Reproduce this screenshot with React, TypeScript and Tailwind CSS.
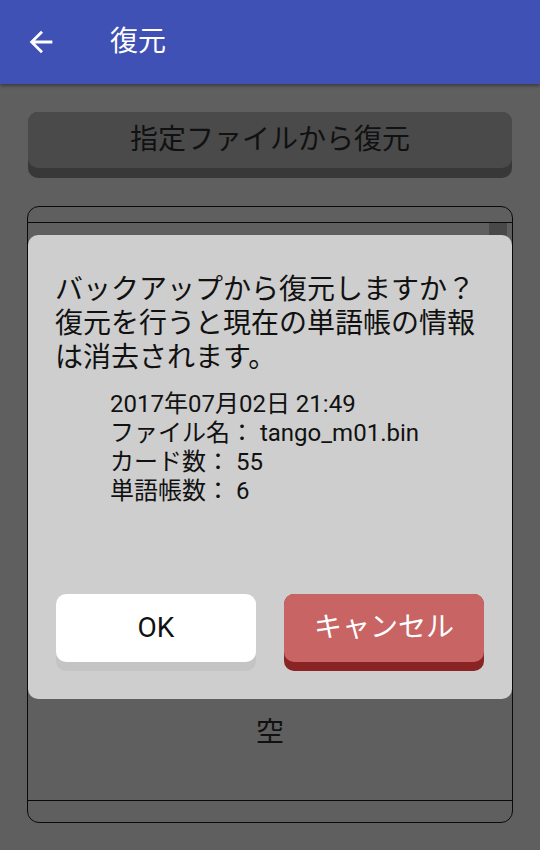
import React from 'react';

const FONT = 'font-["Roboto","Noto_Sans_CJK_JP",sans-serif]';

const BackArrow = () => (
  <svg viewBox="0 0 24 24" className="w-[34px] h-[34px] fill-white">
    <path d="M20 11H7.83l5.59-5.59L12 4l-8 8 8 8 1.41-1.41L7.83 13H20v-2z" />
  </svg>
);

const details = [
  '2017年07月02日 21:49',
  'ファイル名： tango_m01.bin',
  'カード数： 55',
  '単語帳数： 6',
];

// raised button: a face sitting on a darker base
const RaisedButton = ({
  label,
  face,
  base,
  text,
  faceH,
  baseH,
  className = '',
}: {
  label: string;
  face: string;
  base: string;
  text: string;
  faceH: string;
  baseH: string;
  className?: string;
}) => (
  <button className={`flex flex-col justify-start items-stretch rounded-[10px] ${base} ${baseH} ${className}`}>
    <div className={`w-full ${faceH} rounded-[10px] ${face} flex items-center justify-center text-[28px] leading-none ${text}`}>
      {label}
    </div>
  </button>
);

export default function App() {
  return (
    <div className={`relative w-[540px] h-[850px] overflow-hidden bg-[#5f5f5f] ${FONT}`}>
      {/* app bar */}
      <header className="relative z-10 h-[84px] bg-[#3f51b5] flex items-center shadow-[0_2px_3px_rgba(0,0,0,0.35)]">
        <div className="ml-[24px]">
          <BackArrow />
        </div>
        <h1 className="ml-[52px] text-[28px] leading-none text-white">復元</h1>
      </header>

      <main className="px-[28px] pt-[28px]">
        <RaisedButton
          label="指定ファイルから復元"
          face="bg-[#4a4a4a]"
          base="bg-[#383838]"
          text="text-[#111]"
          faceH="h-[56px]"
          baseH="h-[66px]"
          className="w-full"
        />

        {/* backup list */}
        <div className="relative mt-[28px] -mx-px h-[617px] border-[1.5px] border-[#0a0a0a] rounded-[12px] flex flex-col overflow-hidden">
          <div className="h-[16px] border-b-[1.5px] border-[#0a0a0a]" />
          <div className="flex-1 relative flex flex-col items-center justify-end pb-[53px]">
            <div className="absolute right-[5px] top-0 w-[18px] h-[80px] bg-[#484848]" />
            <span className="text-[28px] leading-none text-[#111]">空</span>
          </div>
          <div className="h-[22px] border-t-[1.5px] border-[#0a0a0a]" />
        </div>
      </main>

      {/* dialog */}
      <div className="absolute left-[28px] top-[235px] w-[484px] rounded-[10px] bg-[#cecece] px-[27px] pt-[38px] pb-[28px]">
        <p className="text-[28px] leading-[34px] text-[#111]">
          バックアップから復元しますか？<br />
          復元を行うと現在の単語帳の情報<br />
          は消去されます。
        </p>
        <div className="mt-[15px] pl-[55px] text-[24px] leading-[29px] text-[#111]">
          {details.map((d) => (
            <div key={d}>{d}</div>
          ))}
        </div>
        <div className="mt-[88px] flex gap-[28px] pl-px">
          <RaisedButton
            label="OK"
            face="bg-white"
            base="bg-[#c4c4c4]"
            text="text-[#111]"
            faceH="h-[68px]"
            baseH="h-[77px]"
            className="w-[200px]"
          />
          <RaisedButton
            label="キャンセル"
            face="bg-[#c86464]"
            base="bg-[#8a2424]"
            text="text-white"
            faceH="h-[68px]"
            baseH="h-[77px]"
            className="w-[200px]"
          />
        </div>
      </div>
    </div>
  );
}
